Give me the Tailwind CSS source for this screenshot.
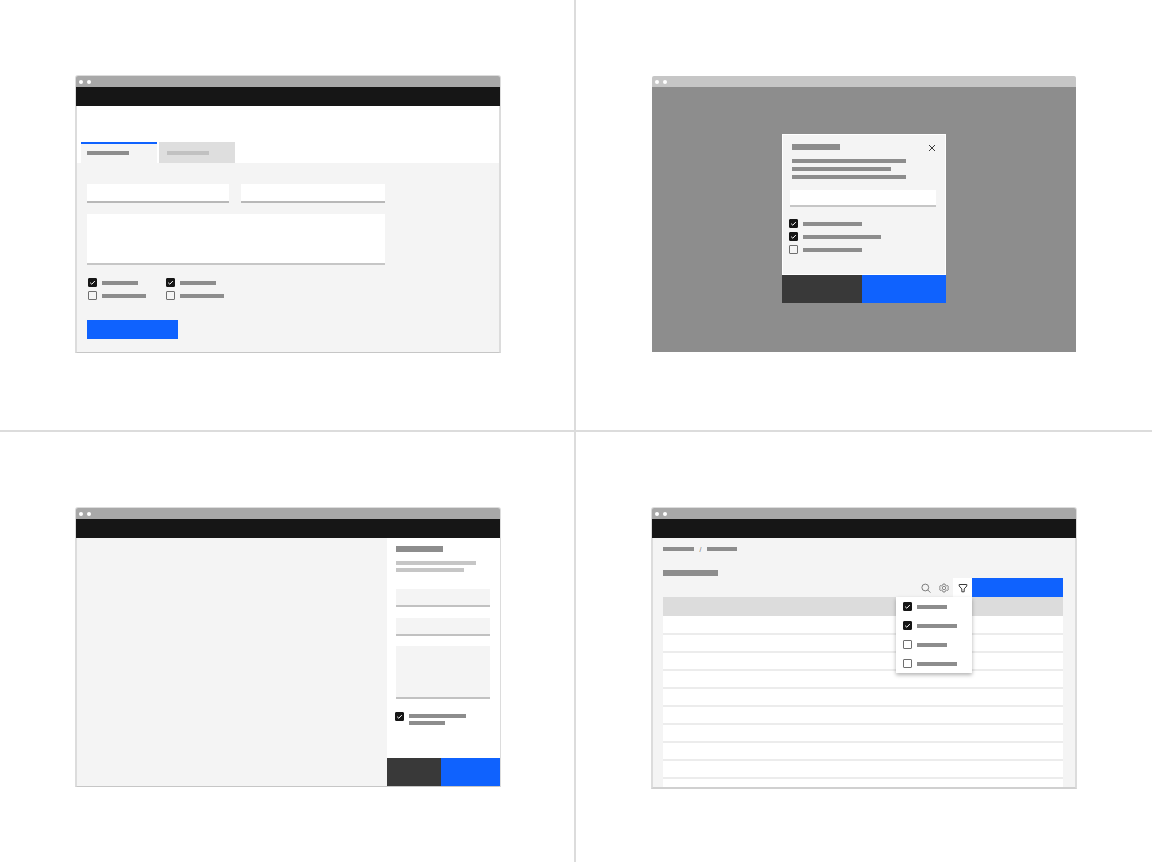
<!DOCTYPE html>
<html lang="en">
<head>
    <meta charset="UTF-8">
    <meta name="viewport" content="width=device-width, initial-scale=1.0">
    <title>Form layouts</title>
    <script src="https://cdn.jsdelivr.net/npm/@tailwindcss/browser@4"></script>
</head>
<body class="bg-white" style="font-family: 'Liberation Sans', Arial, sans-serif">
    <!-- Shared tick for checkboxes -->
    <svg class="hidden">
        <symbol id="tick" viewBox="0 0 10 10">
            <path d="M2.4 5.2 4.2 6.9 7.6 3.4" fill="none" stroke="#fff" stroke-width="1.1" />
        </symbol>
    </svg>

    <main class="grid grid-cols-2">
        <!-- Page form with tabs -->
        <section class="border-r-2 border-b-2 border-[#dcdcdc] pt-[75px] pb-[77px] pl-[75px] pr-[73px]">
            <div class="rounded-t-[3px] border-x-2 border-t border-b border-[#dcdcdc] border-b-[#c6c6c6]">
                <div class="-mx-px flex h-[11px] items-center gap-1 rounded-t-[2px] bg-[#a8a8a8] pl-[3px]">
                    <span class="size-[4px] rounded-full bg-white"></span>
                    <span class="size-[4px] rounded-full bg-white"></span>
                </div>
                <div class="-mx-px h-[19px] bg-[#161616]"></div>
                <div class="flex gap-[2px] pt-9 pl-1" role="tablist">
                    <button type="button" role="tab" aria-selected="true" aria-label="First tab" class="h-[21px] w-[76px] border-t-2 border-[#0f62fe] bg-[#f4f4f4] pb-[2px] pl-[6px]">
                        <span class="block h-1 w-[42px] bg-[#8d8d8d]"></span>
                    </button>
                    <button type="button" role="tab" aria-selected="false" aria-label="Second tab" class="h-[21px] w-[76px] border-t-2 border-[#dedede] bg-[#dedede] pb-[2px] pl-2">
                        <span class="block h-1 w-[42px] bg-[#c1c1c1]"></span>
                    </button>
                </div>
                <form class="bg-[#f4f4f4] pt-[21px] pb-[13px] pl-[10px]">
                    <div class="w-[298px] max-w-full">
                        <div class="flex gap-3">
                            <input type="text" aria-label="First field" class="h-[19px] w-[142px] border-b-2 border-[#b8b8b8] bg-white">
                            <input type="text" aria-label="Second field" class="h-[19px] min-w-0 flex-1 border-b-2 border-[#b8b8b8] bg-white">
                        </div>
                        <textarea aria-label="Long text" class="mt-[11px] block h-[51px] w-full resize-none border-b-2 border-[#c6c6c6] bg-white"></textarea>
                    </div>
                    <div class="mt-[13px] ml-px grid w-[155px] grid-cols-[78px_1fr] gap-y-1">
                        <label class="relative flex items-center gap-[5px]">
                            <input type="checkbox" checked aria-label="Option 1" class="peer size-[9px] appearance-none rounded-[1px] border border-[#6f6f6f] checked:border-[#161616] checked:bg-[#161616]">
                            <svg class="pointer-events-none absolute left-0 hidden size-[9px] peer-checked:block"><use href="#tick" /></svg>
                            <span class="h-1 w-9 bg-[#8d8d8d]"></span>
                        </label>
                        <label class="relative flex items-center gap-[5px]">
                            <input type="checkbox" checked aria-label="Option 2" class="peer size-[9px] appearance-none rounded-[1px] border border-[#6f6f6f] checked:border-[#161616] checked:bg-[#161616]">
                            <svg class="pointer-events-none absolute left-0 hidden size-[9px] peer-checked:block"><use href="#tick" /></svg>
                            <span class="h-1 w-9 bg-[#8d8d8d]"></span>
                        </label>
                        <label class="flex items-center gap-[5px]">
                            <input type="checkbox" aria-label="Option 3" class="size-[9px] appearance-none rounded-[1px] border border-[#6f6f6f]">
                            <span class="h-1 w-11 bg-[#8d8d8d]"></span>
                        </label>
                        <label class="flex items-center gap-[5px]">
                            <input type="checkbox" aria-label="Option 4" class="size-[9px] appearance-none rounded-[1px] border border-[#6f6f6f]">
                            <span class="h-1 w-11 bg-[#8d8d8d]"></span>
                        </label>
                    </div>
                    <button type="button" aria-label="Submit" class="mt-5 block h-[19px] w-[91px] bg-[#0f62fe]"></button>
                </form>
            </div>
        </section>

        <!-- Modal form -->
        <section class="border-b-2 border-[#dcdcdc] px-[76px] pt-[76px] pb-[78px]">
            <div class="flex h-[11px] items-center gap-1 rounded-t-[2px] bg-[#c6c6c6] pl-[3px]">
                <span class="size-[4px] rounded-full bg-white"></span>
                <span class="size-[4px] rounded-full bg-white"></span>
            </div>
            <div class="flex justify-center bg-[#8d8d8d] pt-[47px] pb-[49px]">
                <form class="w-[164px]" role="dialog" aria-label="Modal">
                    <div class="border border-white bg-[#f4f4f4] pr-[9px] pb-5 pl-[7px]">
                        <div class="flex justify-between pt-[9px] pl-[2px]">
                            <span class="h-[6px] w-12 bg-[#8d8d8d]"></span>
                            <button type="button" aria-label="Close" class="size-2">
                                <svg viewBox="0 0 8 8" class="size-2" fill="none" stroke="#393939" stroke-width="1"><path d="M1 1 7 7M7 1 1 7" /></svg>
                            </button>
                        </div>
                        <div class="mt-[7px] flex flex-col gap-1 pl-[2px]">
                            <span class="h-1 w-[114px] bg-[#8d8d8d]"></span>
                            <span class="h-1 w-[99px] bg-[#8d8d8d]"></span>
                            <span class="h-1 w-[114px] bg-[#8d8d8d]"></span>
                        </div>
                        <input type="text" aria-label="Field" class="mt-[11px] block h-[17px] w-full border-b-2 border-[#c6c6c6] bg-white">
                        <div class="-ml-px mt-3 flex flex-col gap-1">
                            <label class="relative flex items-center gap-[5px]">
                                <input type="checkbox" checked aria-label="Option 1" class="peer size-[9px] appearance-none rounded-[1px] border border-[#6f6f6f] checked:border-[#161616] checked:bg-[#161616]">
                                <svg class="pointer-events-none absolute left-0 hidden size-[9px] peer-checked:block"><use href="#tick" /></svg>
                                <span class="h-1 w-[59px] bg-[#8d8d8d]"></span>
                            </label>
                            <label class="relative flex items-center gap-[5px]">
                                <input type="checkbox" checked aria-label="Option 2" class="peer size-[9px] appearance-none rounded-[1px] border border-[#6f6f6f] checked:border-[#161616] checked:bg-[#161616]">
                                <svg class="pointer-events-none absolute left-0 hidden size-[9px] peer-checked:block"><use href="#tick" /></svg>
                                <span class="h-1 w-[78px] bg-[#8d8d8d]"></span>
                            </label>
                            <label class="flex items-center gap-[5px]">
                                <input type="checkbox" aria-label="Option 3" class="size-[9px] appearance-none rounded-[1px] border border-[#6f6f6f]">
                                <span class="h-1 w-[59px] bg-[#8d8d8d]"></span>
                            </label>
                        </div>
                    </div>
                    <div class="flex">
                        <button type="button" aria-label="Cancel" class="h-7 w-20 bg-[#393939]"></button>
                        <button type="button" aria-label="Save" class="h-7 flex-1 bg-[#0f62fe]"></button>
                    </div>
                </form>
            </div>
        </section>

        <!-- Side panel form -->
        <section class="border-r-2 border-[#dcdcdc] pt-[75px] pb-[73px] pl-[75px] pr-[73px]">
            <div class="rounded-t-[3px] border-x-2 border-t border-b border-[#dcdcdc] border-b-[#c6c6c6]">
                <div class="-mx-px flex h-[11px] items-center gap-1 rounded-t-[2px] bg-[#a8a8a8] pl-[3px]">
                    <span class="size-[4px] rounded-full bg-white"></span>
                    <span class="size-[4px] rounded-full bg-white"></span>
                </div>
                <div class="-mx-px h-[19px] bg-[#161616]"></div>
                <div class="-mr-px flex">
                    <div class="flex-1 bg-[#f4f4f4]"></div>
                    <form class="w-[113px]">
                        <div class="flex flex-col bg-white pt-2 pr-[10px] pb-[33px] pl-[9px]">
                            <span class="h-[6px] w-[47px] bg-[#8d8d8d]"></span>
                            <span class="mt-[9px] h-1 w-20 bg-[#c6c6c6]"></span>
                            <span class="mt-[3px] h-1 w-[68px] bg-[#c6c6c6]"></span>
                            <input type="text" aria-label="First field" class="mt-[17px] h-[18px] w-full border-b-2 border-[#c1c1c1] bg-[#f4f4f4]">
                            <input type="text" aria-label="Second field" class="mt-[11px] h-[18px] w-full border-b-2 border-[#c1c1c1] bg-[#f4f4f4]">
                            <textarea aria-label="Long text" class="mt-[10px] h-[53px] w-full resize-none border-b-2 border-[#c1c1c1] bg-[#f4f4f4]"></textarea>
                            <label class="relative -ml-px mt-[13px] flex gap-[5px]">
                                <input type="checkbox" checked aria-label="Option" class="peer size-[9px] appearance-none rounded-[1px] border border-[#6f6f6f] checked:border-[#161616] checked:bg-[#161616]">
                                <svg class="pointer-events-none absolute left-0 hidden size-[9px] peer-checked:block"><use href="#tick" /></svg>
                                <span class="flex flex-col gap-[3px] pt-[2px]">
                                    <span class="h-1 w-[57px] bg-[#8d8d8d]"></span>
                                    <span class="h-1 w-9 bg-[#8d8d8d]"></span>
                                </span>
                            </label>
                        </div>
                        <div class="flex">
                            <button type="button" aria-label="Cancel" class="h-7 w-[54px] bg-[#393939]"></button>
                            <button type="button" aria-label="Save" class="h-7 flex-1 bg-[#0f62fe]"></button>
                        </div>
                    </form>
                </div>
            </div>
        </section>

        <!-- Table with filter menu -->
        <section class="px-[75px] pt-[75px] pb-[73px]">
            <div class="rounded-t-[3px] border-x-2 border-t border-b-2 border-[#dcdcdc] border-b-[#d0d0d0]">
                <div class="-mx-px flex h-[11px] items-center gap-1 rounded-t-[2px] bg-[#a8a8a8] pl-[3px]">
                    <span class="size-[4px] rounded-full bg-white"></span>
                    <span class="size-[4px] rounded-full bg-white"></span>
                </div>
                <div class="-mx-px h-[19px] bg-[#161616]"></div>
                <div class="bg-[#f4f4f4] pr-3 pl-[10px]">
                    <nav class="flex h-[22px] items-center" aria-label="Breadcrumb">
                        <a href="#" aria-label="Parent" class="h-1 w-[31px] bg-[#8d8d8d]"></a>
                        <span class="w-[13px] text-center text-[7px] leading-none text-[#6f6f6f]">/</span>
                        <a href="#" aria-label="Current" class="h-1 w-[30px] bg-[#8d8d8d]"></a>
                    </nav>
                    <div class="mt-[10px] h-[6px] w-[55px] bg-[#8d8d8d]"></div>
                    <div class="mt-[2px] flex h-[19px] justify-end">
                        <button type="button" aria-label="Search" class="flex w-[18px] items-center justify-center">
                            <svg viewBox="0 0 10 10" class="size-[10px]" fill="none" stroke="#6f6f6f" stroke-width="0.9"><circle cx="4.3" cy="4.5" r="3.4" /><path d="M6.700 6.900 9.400 9.600" /></svg>
                        </button>
                        <button type="button" aria-label="Settings" class="flex w-[18px] items-center justify-center">
                            <svg viewBox="0 0 10 10" class="size-[10px]" fill="none" stroke="#6f6f6f" stroke-width="0.8"><path d="M4 1h2l.3 1.2 1.2.6 1.1-.3.9 1.6-.8.9.8 1-.9 1.5-1.1-.3-1.2.6L6 9H4l-.3-1.2-1.2-.6-1.1.3-.9-1.5.8-1-.8-.9.9-1.600 1.100.3 1.200-.6z" /><circle cx="5" cy="5" r="1.7" /></svg>
                        </button>
                        <div class="relative">
                            <button type="button" aria-label="Filter" class="flex h-[19px] w-[19px] items-center justify-center bg-white">
                                <svg viewBox="0 0 10 10" class="size-[10px]" fill="none" stroke="#393939" stroke-width="1"><path d="M1.200 1.500h7.600v1.500L6.200 5.900V8.800H3.800V5.900L1.200 3z" /></svg>
                            </button>
                            <!-- Filter menu -->
                            <div class="absolute top-full right-0 w-[76px] bg-white shadow-[0_2px_4px_rgba(0,0,0,0.3)]">
                                <label class="relative flex h-[19px] items-center gap-[5px] pl-[7px]">
                                    <input type="checkbox" checked aria-label="Filter 1" class="peer size-[9px] appearance-none rounded-[1px] border border-[#6f6f6f] checked:border-[#161616] checked:bg-[#161616]">
                                    <svg class="pointer-events-none absolute left-[7px] hidden size-[9px] peer-checked:block"><use href="#tick" /></svg>
                                    <span class="h-1 w-[30px] bg-[#8d8d8d]"></span>
                                </label>
                                <label class="relative flex h-[19px] items-center gap-[5px] pl-[7px]">
                                    <input type="checkbox" checked aria-label="Filter 2" class="peer size-[9px] appearance-none rounded-[1px] border border-[#6f6f6f] checked:border-[#161616] checked:bg-[#161616]">
                                    <svg class="pointer-events-none absolute left-[7px] hidden size-[9px] peer-checked:block"><use href="#tick" /></svg>
                                    <span class="h-1 w-10 bg-[#8d8d8d]"></span>
                                </label>
                                <label class="flex h-[19px] items-center gap-[5px] pl-[7px]">
                                    <input type="checkbox" aria-label="Filter 3" class="size-[9px] appearance-none rounded-[1px] border border-[#6f6f6f]">
                                    <span class="h-1 w-[30px] bg-[#8d8d8d]"></span>
                                </label>
                                <label class="flex h-[19px] items-center gap-[5px] pl-[7px]">
                                    <input type="checkbox" aria-label="Filter 4" class="size-[9px] appearance-none rounded-[1px] border border-[#6f6f6f]">
                                    <span class="h-1 w-10 bg-[#8d8d8d]"></span>
                                </label>
                            </div>
                        </div>
                        <button type="button" aria-label="Add" class="w-[91px] bg-[#0f62fe]"></button>
                    </div>
                    <table class="w-full border-separate border-spacing-0 bg-white">
                        <thead>
                            <tr><th class="h-[19px] bg-[#dcdcdc] p-0"></th></tr>
                        </thead>
                        <tbody>
                            <tr><td class="h-[19px] border-b-2 border-[#ececec] p-0"></td></tr>
                            <tr><td class="h-[18px] border-b-2 border-[#ececec] p-0"></td></tr>
                            <tr><td class="h-[18px] border-b-2 border-[#ececec] p-0"></td></tr>
                            <tr><td class="h-[18px] border-b-2 border-[#ececec] p-0"></td></tr>
                            <tr><td class="h-[18px] border-b-2 border-[#ececec] p-0"></td></tr>
                            <tr><td class="h-[18px] border-b-2 border-[#ececec] p-0"></td></tr>
                            <tr><td class="h-[18px] border-b-2 border-[#ececec] p-0"></td></tr>
                            <tr><td class="h-[18px] border-b-2 border-[#ececec] p-0"></td></tr>
                            <tr><td class="h-[18px] border-b-2 border-[#ececec] p-0"></td></tr>
                            <tr><td class="h-2 p-0"></td></tr>
                        </tbody>
                    </table>
                </div>
            </div>
        </section>
    </main>
</body>
</html>
